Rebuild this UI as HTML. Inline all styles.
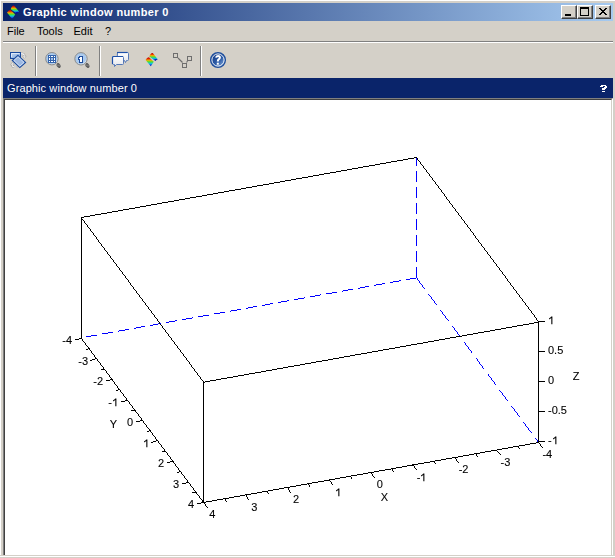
<!DOCTYPE html>
<html><head><meta charset="utf-8">
<style>
html,body{margin:0;padding:0;}
body{width:615px;height:558px;position:relative;overflow:hidden;background:#d4d0c8;font-family:"Liberation Sans",sans-serif;}
.abs{position:absolute;}
#hl{position:absolute;left:0;top:0;width:615px;height:1px;background:#fff;}
#vl{position:absolute;left:0;top:0;width:1px;height:558px;background:#fff;}
#title{position:absolute;left:3px;top:3px;width:610px;height:18px;background:linear-gradient(to right,#0a246a,#a6caf0);}
#title .t{position:absolute;left:20px;top:3px;letter-spacing:0.36px;font-weight:bold;font-size:11px;color:#fff;line-height:13px;white-space:nowrap;}
.cb{position:absolute;top:5px;width:16px;height:14px;background:#d4d0c8;box-sizing:border-box;}
.cb:before{content:"";position:absolute;left:0;top:0;right:0;bottom:0;border-top:1px solid #fff;border-left:1px solid #fff;border-right:1px solid #404040;border-bottom:1px solid #404040;}
.cb:after{content:"";position:absolute;left:1px;top:1px;right:1px;bottom:1px;border-right:1px solid #808080;border-bottom:1px solid #808080;}
.menu{position:absolute;top:25px;font-size:11px;line-height:13px;color:#000;white-space:nowrap;}
#msep1{position:absolute;left:3px;top:41px;width:610px;height:1px;background:#808080;}
#msep2{position:absolute;left:3px;top:42px;width:610px;height:1px;background:#fff;}
.tsep{position:absolute;top:46px;width:1px;height:30px;background:#808080;}
.tsep2{position:absolute;top:46px;width:1px;height:30px;background:#fff;}
#hdr{position:absolute;left:3px;top:78px;width:610px;height:20px;background:#0a246a;}
#hdr .t{position:absolute;left:4px;top:4px;letter-spacing:0.1px;font-size:11px;line-height:13px;color:#fff;white-space:nowrap;}
#hdr .q{position:absolute;left:597px;top:4px;font-size:11px;font-weight:bold;line-height:13px;color:#fff;}
#canvas{position:absolute;left:3px;top:98px;width:610px;height:459px;box-sizing:border-box;background:#fff;border-top:1px solid #808080;border-left:1px solid #808080;border-right:1px solid #fff;border-bottom:1px solid #fff;}
#canvas:before{content:"";position:absolute;left:0;top:0;right:0;bottom:0;border-top:1px solid #404040;border-left:1px solid #404040;border-right:1px solid #d4d0c8;border-bottom:1px solid #d4d0c8;}
.plot{position:absolute;left:0;top:0;}
#labels{position:absolute;left:0;top:0;width:615px;height:558px;will-change:transform;}
.lb,.lc{position:absolute;font-size:11px;line-height:13px;color:#000;white-space:nowrap;-webkit-text-stroke:0.1px #000;}
.lc{width:60px;text-align:center;}
.one{display:inline-block;width:6.12px;height:13px;vertical-align:top;}
.one svg{display:block;}
</style></head><body>
<div id="hl"></div><div id="vl"></div>
<div id="title">
  <svg class="abs" style="left:3px;top:1px" width="16" height="16">
    <g transform="translate(0.6,1.9)"><use href="#logo"/></g>
  </svg>
  <div class="t">Graphic window number 0</div>
</div>
<div class="cb" style="left:561px"></div>
<div class="cb" style="left:577px"></div>
<div class="cb" style="left:595px"></div>
<svg class="abs" style="left:0;top:0" width="615" height="22" shape-rendering="crispEdges">
  <rect x="565" y="14" width="6" height="2" fill="#000"/>
  <path d="M580 7h9v9h-9z M581 9v6h7v-6z" fill="#000" fill-rule="evenodd"/>
  <path d="M599 8h2v1h-2zM605 8h2v1h-2zM600 9h2v1h-2zM604 9h2v1h-2zM601 10h4v1h-4zM602 11h2v1h-2zM601 12h4v1h-4zM600 13h2v1h-2zM604 13h2v1h-2zM599 14h2v1h-2zM605 14h2v1h-2z" fill="#000"/>
</svg>
<div class="menu" style="left:7px">File</div>
<div class="menu" style="left:37px">Tools</div>
<div class="menu" style="left:73.5px">Edit</div>
<div class="menu" style="left:105px">?</div>
<div id="msep1"></div><div id="msep2"></div>
<div class="tsep" style="left:35px"></div><div class="tsep2" style="left:36px"></div>
<div class="tsep" style="left:99px"></div><div class="tsep2" style="left:100px"></div>
<div class="tsep" style="left:200px"></div><div class="tsep2" style="left:201px"></div>
<!-- toolbar icons -->
<svg class="abs" style="left:0;top:40px" width="240" height="36">
  <defs>
    <linearGradient id="bl" x1="0" y1="0" x2="1" y2="1"><stop offset="0" stop-color="#c4d8f2"/><stop offset="1" stop-color="#7fa3d8"/></linearGradient>
    <radialGradient id="lens" cx="0.45" cy="0.45" r="0.55"><stop offset="0" stop-color="#b4d0f0"/><stop offset="0.75" stop-color="#a8c8ec"/><stop offset="1" stop-color="#dceaf8"/></radialGradient>
    <linearGradient id="bub" x1="0" y1="0" x2="0" y2="1"><stop offset="0" stop-color="#ffffff"/><stop offset="1" stop-color="#e2e4ea"/></linearGradient>
    <linearGradient id="hlp" x1="0.15" y1="0.15" x2="0.9" y2="0.9"><stop offset="0" stop-color="#173f8a"/><stop offset="0.55" stop-color="#2f5ea8"/><stop offset="1" stop-color="#80a6da"/></linearGradient>
    <linearGradient id="knob" x1="0" y1="0" x2="1" y2="1"><stop offset="0" stop-color="#3a3a3a"/><stop offset="0.5" stop-color="#7a7a7a"/><stop offset="1" stop-color="#2a2a2a"/></linearGradient>
  </defs>
  <!-- rotate icon -->
  <g fill="none" stroke-linecap="round">
  <path d="M21 13.9 H22.4 Q24.3 13.9 24.3 15.8 V16.4" stroke="#a0a0a0" stroke-width="2.2"/>
  <path d="M16.4 27 H14.2 Q12.3 27 12.3 25.1 V24.6" stroke="#a0a0a0" stroke-width="2.2"/>
  <path d="M21 13.9 H22.4 Q24.3 13.9 24.3 15.8 V16.4" stroke="#fff" stroke-width="1.1"/>
  <path d="M16.4 27 H14.2 Q12.3 27 12.3 25.1 V24.6" stroke="#fff" stroke-width="1.1"/>
  </g>
  <path d="M22.4 16.1 H26.2 L24.3 18.4 Z" fill="#fff" stroke="#a0a0a0" stroke-width="0.6"/>
  <path d="M10.4 24.9 H14.2 L12.3 22.4 Z" fill="#fff" stroke="#a0a0a0" stroke-width="0.6"/>
  <rect x="10.5" y="12.5" width="10" height="6" fill="url(#bl)" stroke="#1a4a9c"/>
  <path d="M11.5 17 v-3.5 h8" fill="none" stroke="#e8f0fb" stroke-width="0.8"/>
  <path d="M18 15.3 L25.6 22.4 L19.8 27.6 L12.3 20.5 Z" fill="#9cb8e2" stroke="#1a4a9c" stroke-width="1.1"/>
  <path d="M18 16.8 L24 22.4 L19.8 26.1 L13.8 20.5 Z" fill="none" stroke="#e6eefa" stroke-width="0.7"/>
  <!-- zoom icon -->
  <ellipse cx="58.6" cy="25.5" rx="2.6" ry="1.9" transform="rotate(45 58.6 25.5)" fill="url(#knob)"/>
  <circle cx="51.9" cy="18.7" r="6.2" fill="url(#lens)" stroke="#8a8a8a" stroke-width="1"/>
  <g shape-rendering="crispEdges">
  <rect x="48" y="15" width="8" height="8" fill="#3464ac"/>
  <path d="M49 16h1v1h-1z M51 16h2v1h-2z M54 16h1v1h-1z M49 18h1v2h-1z M54 18h1v2h-1z M49 21h1v1h-1z M51 21h2v1h-2z M54 21h1v1h-1z" fill="#fff"/>
  <rect x="51" y="18" width="2" height="2" fill="#9cbce6"/>
  </g>
  <!-- zoom 1 icon -->
  <ellipse cx="87.4" cy="25.5" rx="2.6" ry="1.9" transform="rotate(45 87.4 25.5)" fill="url(#knob)"/>
  <circle cx="81" cy="18.8" r="6.2" fill="url(#lens)" stroke="#8a8a8a" stroke-width="1"/>
  <g shape-rendering="crispEdges"><path d="M79 16h4v7h-4v-3h-1v-3h1z" fill="#1e4c9c"/><path d="M80 17h2v5h-2v-3h-1v-1h1z" fill="#fff"/></g>
  <!-- bubbles -->
  <path d="M117.5 12.5 h10 a1 1 0 0 1 1 1 v6 a1 1 0 0 1 -1 1 h-1 l-1 2 l-1 -2 h-7.5z" fill="url(#bub)" stroke="#5478b8"/>
  <path d="M117 12.5 h10.5" stroke="#1e50a8" stroke-width="1.2"/>
  <path d="M113.5 16.5 h9 a1 1 0 0 1 1 1 v6 a1 1 0 0 1 -1 1 h-6 l-2 2 v-2 h-1 a1 1 0 0 1 -1 -1 v-6 a1 1 0 0 1 1 -1z" fill="url(#bub)" stroke="#5478b8"/>
  <path d="M112.5 24 v-6.5 a1 1 0 0 1 1 -1 h9.5" fill="none" stroke="#1e50a8" stroke-width="1.2"/>
  <!-- scilab logo -->
  <defs>
  <linearGradient id="lg1" gradientUnits="userSpaceOnUse" x1="0" y1="3.6" x2="0" y2="13"><stop offset="0" stop-color="#b00000"/><stop offset="0.18" stop-color="#e02000"/><stop offset="0.36" stop-color="#f0b000"/><stop offset="0.52" stop-color="#50e030"/><stop offset="0.7" stop-color="#10c8d8"/><stop offset="0.86" stop-color="#1050e0"/><stop offset="1" stop-color="#0000a0"/></linearGradient>
  <linearGradient id="lg2" gradientUnits="userSpaceOnUse" x1="0" y1="-0.6" x2="0" y2="7.5"><stop offset="0" stop-color="#b00000"/><stop offset="0.18" stop-color="#e02000"/><stop offset="0.36" stop-color="#f0b000"/><stop offset="0.52" stop-color="#50e030"/><stop offset="0.7" stop-color="#10c8d8"/><stop offset="0.86" stop-color="#1050e0"/><stop offset="1" stop-color="#0000a0"/></linearGradient>
  <g id="logo">
  <path d="M0.4 6.6 Q2.2 3.5 4.1 4.2 L8.6 8.5 L5.6 13 Z" fill="url(#lg1)"/>
  <path d="M4.1 3.3 Q5.6 -0.9 7.6 -0.2 L12.5 5.9 L9.9 7.5 Z" fill="url(#lg2)"/>
  <path d="M9.6 6.2 L12.5 5.9 L9.9 7.5 Z" fill="#0000a0"/>
  </g>
  </defs>
  <use href="#logo" x="145.2" y="13.3"/>
  <!-- datatip -->
  <g shape-rendering="crispEdges" fill="none" stroke="#6e6e6e">
  <rect x="173.5" y="13.5" width="4" height="4"/>
  <rect x="182.5" y="23.5" width="4" height="4"/>
  <rect x="187.5" y="16.5" width="4" height="4"/>
  </g>
  <path d="M178 18 L182.5 22.5 M186.5 22.5 L187.5 21" stroke="#6e6e6e" stroke-width="1.1"/>
  <!-- help -->
  <circle cx="218" cy="20" r="7.3" fill="url(#hlp)" stroke="#1e4e9c" stroke-width="1.5"/>
  <circle cx="218" cy="20" r="6.1" fill="none" stroke="#fff" stroke-width="0.9"/>
  <path d="M216.1 17.6 Q216.3 15.9 218 15.9 Q219.9 15.9 219.9 17.6 Q219.9 18.7 218.7 19.4 Q217.8 19.9 217.8 21.4" fill="none" stroke="#fff" stroke-width="2"/><rect x="216.8" y="22.7" width="2" height="2" fill="#fff"/>
</svg>
<div id="hdr"><div class="t">Graphic window number 0</div><svg class="abs" style="left:0;top:0" width="610" height="20" shape-rendering="crispEdges"><path fill="#fff" d="M598 7h5v1h-5z M597 8h3v1h-3z M602 8h2v1h-2z M601 9h3v1h-3z M599 10h4v1h-4z M599 11h3v1h-3z M599 13h3v1h-3z"/></svg></div>
<div id="canvas"></div>
<div class="abs" style="left:0;top:555px;width:615px;height:1px;background:#d4d0c8"></div><div class="abs" style="left:0;top:556px;width:615px;height:1px;background:#fff"></div><div class="abs" style="left:0;top:557px;width:615px;height:1px;background:#d4d0c8"></div>
<svg class="plot" width="615" height="558" shape-rendering="crispEdges"><path fill="#0000ff" d="M416 157h1v1h-1zM416 158h1v1h-1zM416 159h1v1h-1zM416 160h1v1h-1zM416 161h1v1h-1zM416 162h1v1h-1zM416 163h1v1h-1zM416 164h1v1h-1zM416 165h1v1h-1zM416 171h1v1h-1zM416 172h1v1h-1zM416 173h1v1h-1zM416 174h1v1h-1zM416 175h1v1h-1zM416 176h1v1h-1zM416 177h1v1h-1zM416 178h1v1h-1zM416 179h1v1h-1zM416 180h1v1h-1zM416 181h1v1h-1zM416 187h1v1h-1zM416 188h1v1h-1zM416 189h1v1h-1zM416 190h1v1h-1zM416 191h1v1h-1zM416 192h1v1h-1zM416 193h1v1h-1zM416 194h1v1h-1zM416 195h1v1h-1zM416 196h1v1h-1zM416 197h1v1h-1zM416 203h1v1h-1zM416 204h1v1h-1zM416 205h1v1h-1zM416 206h1v1h-1zM416 207h1v1h-1zM416 208h1v1h-1zM416 209h1v1h-1zM416 210h1v1h-1zM416 211h1v1h-1zM416 212h1v1h-1zM416 213h1v1h-1zM416 219h1v1h-1zM416 220h1v1h-1zM416 221h1v1h-1zM416 222h1v1h-1zM416 223h1v1h-1zM416 224h1v1h-1zM416 225h1v1h-1zM416 226h1v1h-1zM416 227h1v1h-1zM416 228h1v1h-1zM416 229h1v1h-1zM416 235h1v1h-1zM416 236h1v1h-1zM416 237h1v1h-1zM416 238h1v1h-1zM416 239h1v1h-1zM416 240h1v1h-1zM416 241h1v1h-1zM416 242h1v1h-1zM416 243h1v1h-1zM416 244h1v1h-1zM416 245h1v1h-1zM416 251h1v1h-1zM416 252h1v1h-1zM416 253h1v1h-1zM416 254h1v1h-1zM416 255h1v1h-1zM416 256h1v1h-1zM416 257h1v1h-1zM416 258h1v1h-1zM416 259h1v1h-1zM416 260h1v1h-1zM416 261h1v1h-1zM416 267h1v1h-1zM416 268h1v1h-1zM416 269h1v1h-1zM416 270h1v1h-1zM416 271h1v1h-1zM416 272h1v1h-1zM416 273h1v1h-1zM416 274h1v1h-1zM416 275h1v1h-1zM416 276h1v1h-1zM416 277h1v1h-1zM410 278h6v1h-6zM417 278h1v1h-1zM406 279h4v1h-4zM417 279h1v1h-1zM399 280h2v1h-2zM418 280h1v1h-1zM393 281h6v1h-6zM419 281h1v1h-1zM390 282h3v1h-3zM419 282h1v1h-1zM382 283h3v1h-3zM420 283h1v1h-1zM376 284h6v1h-6zM421 284h1v1h-1zM374 285h2v1h-2zM422 285h1v1h-1zM365 286h4v1h-4zM422 286h1v1h-1zM360 287h5v1h-5zM423 287h1v1h-1zM358 288h2v1h-2zM424 288h1v1h-1zM348 289h5v1h-5zM343 290h5v1h-5zM342 291h1v1h-1zM332 292h5v1h-5zM326 293h6v1h-6zM320 294h1v1h-1zM428 294h1v1h-1zM315 295h5v1h-5zM429 295h1v1h-1zM310 296h5v1h-5zM430 296h1v1h-1zM304 297h1v1h-1zM431 297h1v1h-1zM298 298h6v1h-6zM431 298h1v1h-1zM294 299h4v1h-4zM432 299h1v1h-1zM287 300h2v1h-2zM433 300h1v1h-1zM281 301h6v1h-6zM434 301h1v1h-1zM278 302h3v1h-3zM434 302h1v1h-1zM270 303h3v1h-3zM435 303h1v1h-1zM265 304h5v1h-5zM436 304h1v1h-1zM262 305h3v1h-3zM253 306h4v1h-4zM248 307h5v1h-5zM246 308h2v1h-2zM237 309h4v1h-4zM231 310h6v1h-6zM440 310h1v1h-1zM230 311h1v1h-1zM441 311h1v1h-1zM220 312h5v1h-5zM442 312h1v1h-1zM214 313h6v1h-6zM442 313h1v1h-1zM443 314h1v1h-1zM203 315h6v1h-6zM444 315h1v1h-1zM198 316h5v1h-5zM445 316h1v1h-1zM192 317h1v1h-1zM445 317h1v1h-1zM186 318h6v1h-6zM446 318h1v1h-1zM182 319h4v1h-4zM447 319h1v1h-1zM175 320h2v1h-2zM448 320h1v1h-1zM169 321h6v1h-6zM166 322h3v1h-3zM158 323h3v1h-3zM153 324h5v1h-5zM150 325h3v1h-3zM141 326h4v1h-4zM452 326h1v1h-1zM136 327h5v1h-5zM453 327h1v1h-1zM134 328h2v1h-2zM454 328h1v1h-1zM125 329h4v1h-4zM454 329h1v1h-1zM119 330h6v1h-6zM455 330h1v1h-1zM118 331h1v1h-1zM456 331h1v1h-1zM108 332h5v1h-5zM457 332h1v1h-1zM102 333h6v1h-6zM457 333h1v1h-1zM458 334h1v1h-1zM91 335h6v1h-6zM459 335h1v1h-1zM86 336h5v1h-5zM459 336h1v1h-1zM464 342h1v1h-1zM465 343h1v1h-1zM465 344h1v1h-1zM466 345h1v1h-1zM467 346h1v1h-1zM468 347h1v1h-1zM468 348h1v1h-1zM469 349h1v1h-1zM470 350h1v1h-1zM471 351h1v1h-1zM471 352h1v1h-1zM476 358h1v1h-1zM477 359h1v1h-1zM477 360h1v1h-1zM478 361h1v1h-1zM479 362h1v1h-1zM479 363h1v1h-1zM480 364h1v1h-1zM481 365h1v1h-1zM482 366h1v1h-1zM482 367h1v1h-1zM483 368h1v1h-1zM488 374h1v1h-1zM488 375h1v1h-1zM489 376h1v1h-1zM490 377h1v1h-1zM491 378h1v1h-1zM491 379h1v1h-1zM492 380h1v1h-1zM493 381h1v1h-1zM494 382h1v1h-1zM494 383h1v1h-1zM495 384h1v1h-1zM499 390h1v1h-1zM500 391h1v1h-1zM501 392h1v1h-1zM502 393h1v1h-1zM502 394h1v1h-1zM503 395h1v1h-1zM504 396h1v1h-1zM505 397h1v1h-1zM505 398h1v1h-1zM506 399h1v1h-1zM507 400h1v1h-1zM511 406h1v1h-1zM512 407h1v1h-1zM513 408h1v1h-1zM514 409h1v1h-1zM514 410h1v1h-1zM515 411h1v1h-1zM516 412h1v1h-1zM517 413h1v1h-1zM517 414h1v1h-1zM518 415h1v1h-1zM519 416h1v1h-1zM523 422h1v1h-1zM524 423h1v1h-1zM525 424h1v1h-1zM525 425h1v1h-1zM526 426h1v1h-1zM527 427h1v1h-1zM528 428h1v1h-1zM528 429h1v1h-1zM529 430h1v1h-1zM530 431h1v1h-1zM531 432h1v1h-1zM535 438h1v1h-1zM536 439h1v1h-1zM537 440h1v1h-1zM537 441h1v1h-1zM538 442h1v1h-1z"/><path fill="#000" d="M414 157h3v1h-3zM408 158h6v1h-6zM417 158h1v1h-1zM403 159h5v1h-5zM417 159h1v1h-1zM397 160h6v1h-6zM418 160h1v1h-1zM391 161h6v1h-6zM419 161h1v1h-1zM386 162h5v1h-5zM420 162h1v1h-1zM380 163h6v1h-6zM420 163h1v1h-1zM375 164h5v1h-5zM421 164h1v1h-1zM369 165h6v1h-6zM422 165h1v1h-1zM363 166h6v1h-6zM423 166h1v1h-1zM358 167h5v1h-5zM423 167h1v1h-1zM352 168h6v1h-6zM424 168h1v1h-1zM347 169h5v1h-5zM425 169h1v1h-1zM341 170h6v1h-6zM426 170h1v1h-1zM336 171h5v1h-5zM426 171h1v1h-1zM330 172h6v1h-6zM427 172h1v1h-1zM324 173h6v1h-6zM428 173h1v1h-1zM319 174h5v1h-5zM429 174h1v1h-1zM313 175h6v1h-6zM429 175h1v1h-1zM308 176h5v1h-5zM430 176h1v1h-1zM302 177h6v1h-6zM431 177h1v1h-1zM296 178h6v1h-6zM432 178h1v1h-1zM291 179h5v1h-5zM432 179h1v1h-1zM285 180h6v1h-6zM433 180h1v1h-1zM280 181h5v1h-5zM434 181h1v1h-1zM274 182h6v1h-6zM435 182h1v1h-1zM269 183h5v1h-5zM435 183h1v1h-1zM263 184h6v1h-6zM436 184h1v1h-1zM257 185h6v1h-6zM437 185h1v1h-1zM252 186h5v1h-5zM438 186h1v1h-1zM246 187h6v1h-6zM438 187h1v1h-1zM241 188h5v1h-5zM439 188h1v1h-1zM235 189h6v1h-6zM440 189h1v1h-1zM229 190h6v1h-6zM441 190h1v1h-1zM224 191h5v1h-5zM441 191h1v1h-1zM218 192h6v1h-6zM442 192h1v1h-1zM213 193h5v1h-5zM443 193h1v1h-1zM207 194h6v1h-6zM444 194h1v1h-1zM202 195h5v1h-5zM444 195h1v1h-1zM196 196h6v1h-6zM445 196h1v1h-1zM190 197h6v1h-6zM446 197h1v1h-1zM185 198h5v1h-5zM446 198h1v1h-1zM179 199h6v1h-6zM447 199h1v1h-1zM174 200h5v1h-5zM448 200h1v1h-1zM168 201h6v1h-6zM449 201h1v1h-1zM162 202h6v1h-6zM449 202h1v1h-1zM157 203h5v1h-5zM450 203h1v1h-1zM151 204h6v1h-6zM451 204h1v1h-1zM146 205h5v1h-5zM452 205h1v1h-1zM140 206h6v1h-6zM452 206h1v1h-1zM135 207h5v1h-5zM453 207h1v1h-1zM129 208h6v1h-6zM454 208h1v1h-1zM123 209h6v1h-6zM455 209h1v1h-1zM118 210h5v1h-5zM455 210h1v1h-1zM112 211h6v1h-6zM456 211h1v1h-1zM107 212h5v1h-5zM457 212h1v1h-1zM101 213h6v1h-6zM458 213h1v1h-1zM95 214h6v1h-6zM458 214h1v1h-1zM90 215h5v1h-5zM459 215h1v1h-1zM84 216h6v1h-6zM460 216h1v1h-1zM81 217h3v1h-3zM461 217h1v1h-1zM81 218h1v1h-1zM461 218h1v1h-1zM81 219h2v1h-2zM462 219h1v1h-1zM81 220h1v1h-1zM83 220h1v1h-1zM463 220h1v1h-1zM81 221h1v1h-1zM84 221h1v1h-1zM464 221h1v1h-1zM81 222h1v1h-1zM84 222h1v1h-1zM464 222h1v1h-1zM81 223h1v1h-1zM85 223h1v1h-1zM465 223h1v1h-1zM81 224h1v1h-1zM86 224h1v1h-1zM466 224h1v1h-1zM81 225h1v1h-1zM87 225h1v1h-1zM467 225h1v1h-1zM81 226h1v1h-1zM87 226h1v1h-1zM467 226h1v1h-1zM81 227h1v1h-1zM88 227h1v1h-1zM468 227h1v1h-1zM81 228h1v1h-1zM89 228h1v1h-1zM469 228h1v1h-1zM81 229h1v1h-1zM90 229h1v1h-1zM470 229h1v1h-1zM81 230h1v1h-1zM90 230h1v1h-1zM470 230h1v1h-1zM81 231h1v1h-1zM91 231h1v1h-1zM471 231h1v1h-1zM81 232h1v1h-1zM92 232h1v1h-1zM472 232h1v1h-1zM81 233h1v1h-1zM93 233h1v1h-1zM473 233h1v1h-1zM81 234h1v1h-1zM93 234h1v1h-1zM473 234h1v1h-1zM81 235h1v1h-1zM94 235h1v1h-1zM474 235h1v1h-1zM81 236h1v1h-1zM95 236h1v1h-1zM475 236h1v1h-1zM81 237h1v1h-1zM96 237h1v1h-1zM475 237h1v1h-1zM81 238h1v1h-1zM96 238h1v1h-1zM476 238h1v1h-1zM81 239h1v1h-1zM97 239h1v1h-1zM477 239h1v1h-1zM81 240h1v1h-1zM98 240h1v1h-1zM478 240h1v1h-1zM81 241h1v1h-1zM98 241h1v1h-1zM478 241h1v1h-1zM81 242h1v1h-1zM99 242h1v1h-1zM479 242h1v1h-1zM81 243h1v1h-1zM100 243h1v1h-1zM480 243h1v1h-1zM81 244h1v1h-1zM101 244h1v1h-1zM481 244h1v1h-1zM81 245h1v1h-1zM101 245h1v1h-1zM481 245h1v1h-1zM81 246h1v1h-1zM102 246h1v1h-1zM482 246h1v1h-1zM81 247h1v1h-1zM103 247h1v1h-1zM483 247h1v1h-1zM81 248h1v1h-1zM104 248h1v1h-1zM484 248h1v1h-1zM81 249h1v1h-1zM104 249h1v1h-1zM484 249h1v1h-1zM81 250h1v1h-1zM105 250h1v1h-1zM485 250h1v1h-1zM81 251h1v1h-1zM106 251h1v1h-1zM486 251h1v1h-1zM81 252h1v1h-1zM107 252h1v1h-1zM487 252h1v1h-1zM81 253h1v1h-1zM107 253h1v1h-1zM487 253h1v1h-1zM81 254h1v1h-1zM108 254h1v1h-1zM488 254h1v1h-1zM81 255h1v1h-1zM109 255h1v1h-1zM489 255h1v1h-1zM81 256h1v1h-1zM110 256h1v1h-1zM490 256h1v1h-1zM81 257h1v1h-1zM110 257h1v1h-1zM490 257h1v1h-1zM81 258h1v1h-1zM111 258h1v1h-1zM491 258h1v1h-1zM81 259h1v1h-1zM112 259h1v1h-1zM492 259h1v1h-1zM81 260h1v1h-1zM113 260h1v1h-1zM493 260h1v1h-1zM81 261h1v1h-1zM113 261h1v1h-1zM493 261h1v1h-1zM81 262h1v1h-1zM114 262h1v1h-1zM494 262h1v1h-1zM81 263h1v1h-1zM115 263h1v1h-1zM495 263h1v1h-1zM81 264h1v1h-1zM116 264h1v1h-1zM496 264h1v1h-1zM81 265h1v1h-1zM116 265h1v1h-1zM496 265h1v1h-1zM81 266h1v1h-1zM117 266h1v1h-1zM497 266h1v1h-1zM81 267h1v1h-1zM118 267h1v1h-1zM498 267h1v1h-1zM81 268h1v1h-1zM119 268h1v1h-1zM499 268h1v1h-1zM81 269h1v1h-1zM119 269h1v1h-1zM499 269h1v1h-1zM81 270h1v1h-1zM120 270h1v1h-1zM500 270h1v1h-1zM81 271h1v1h-1zM121 271h1v1h-1zM501 271h1v1h-1zM81 272h1v1h-1zM122 272h1v1h-1zM502 272h1v1h-1zM81 273h1v1h-1zM122 273h1v1h-1zM502 273h1v1h-1zM81 274h1v1h-1zM123 274h1v1h-1zM503 274h1v1h-1zM81 275h1v1h-1zM124 275h1v1h-1zM504 275h1v1h-1zM81 276h1v1h-1zM125 276h1v1h-1zM505 276h1v1h-1zM81 277h1v1h-1zM125 277h1v1h-1zM505 277h1v1h-1zM81 278h1v1h-1zM126 278h1v1h-1zM506 278h1v1h-1zM81 279h1v1h-1zM127 279h1v1h-1zM507 279h1v1h-1zM81 280h1v1h-1zM128 280h1v1h-1zM507 280h1v1h-1zM81 281h1v1h-1zM128 281h1v1h-1zM508 281h1v1h-1zM81 282h1v1h-1zM129 282h1v1h-1zM509 282h1v1h-1zM81 283h1v1h-1zM130 283h1v1h-1zM510 283h1v1h-1zM81 284h1v1h-1zM130 284h1v1h-1zM510 284h1v1h-1zM81 285h1v1h-1zM131 285h1v1h-1zM511 285h1v1h-1zM81 286h1v1h-1zM132 286h1v1h-1zM512 286h1v1h-1zM81 287h1v1h-1zM133 287h1v1h-1zM513 287h1v1h-1zM81 288h1v1h-1zM133 288h1v1h-1zM513 288h1v1h-1zM81 289h1v1h-1zM134 289h1v1h-1zM514 289h1v1h-1zM81 290h1v1h-1zM135 290h1v1h-1zM515 290h1v1h-1zM81 291h1v1h-1zM136 291h1v1h-1zM516 291h1v1h-1zM81 292h1v1h-1zM136 292h1v1h-1zM516 292h1v1h-1zM81 293h1v1h-1zM137 293h1v1h-1zM517 293h1v1h-1zM81 294h1v1h-1zM138 294h1v1h-1zM518 294h1v1h-1zM81 295h1v1h-1zM139 295h1v1h-1zM519 295h1v1h-1zM81 296h1v1h-1zM139 296h1v1h-1zM519 296h1v1h-1zM81 297h1v1h-1zM140 297h1v1h-1zM520 297h1v1h-1zM81 298h1v1h-1zM141 298h1v1h-1zM521 298h1v1h-1zM81 299h1v1h-1zM142 299h1v1h-1zM522 299h1v1h-1zM81 300h1v1h-1zM142 300h1v1h-1zM522 300h1v1h-1zM81 301h1v1h-1zM143 301h1v1h-1zM523 301h1v1h-1zM81 302h1v1h-1zM144 302h1v1h-1zM524 302h1v1h-1zM81 303h1v1h-1zM145 303h1v1h-1zM525 303h1v1h-1zM81 304h1v1h-1zM145 304h1v1h-1zM525 304h1v1h-1zM81 305h1v1h-1zM146 305h1v1h-1zM526 305h1v1h-1zM81 306h1v1h-1zM147 306h1v1h-1zM527 306h1v1h-1zM81 307h1v1h-1zM148 307h1v1h-1zM528 307h1v1h-1zM81 308h1v1h-1zM148 308h1v1h-1zM528 308h1v1h-1zM81 309h1v1h-1zM149 309h1v1h-1zM529 309h1v1h-1zM81 310h1v1h-1zM150 310h1v1h-1zM530 310h1v1h-1zM81 311h1v1h-1zM151 311h1v1h-1zM531 311h1v1h-1zM81 312h1v1h-1zM151 312h1v1h-1zM531 312h1v1h-1zM81 313h1v1h-1zM152 313h1v1h-1zM532 313h1v1h-1zM81 314h1v1h-1zM153 314h1v1h-1zM533 314h1v1h-1zM81 315h1v1h-1zM154 315h1v1h-1zM534 315h1v1h-1zM81 316h1v1h-1zM154 316h1v1h-1zM534 316h1v1h-1zM81 317h1v1h-1zM155 317h1v1h-1zM535 317h1v1h-1zM81 318h1v1h-1zM156 318h1v1h-1zM536 318h1v1h-1zM81 319h1v1h-1zM157 319h1v1h-1zM536 319h1v1h-1zM81 320h1v1h-1zM157 320h1v1h-1zM537 320h1v1h-1zM81 321h1v1h-1zM158 321h1v1h-1zM538 321h7v1h-7zM81 322h1v1h-1zM159 322h1v1h-1zM534 322h5v1h-5zM81 323h1v1h-1zM159 323h1v1h-1zM529 323h5v1h-5zM538 323h1v1h-1zM81 324h1v1h-1zM160 324h1v1h-1zM523 324h6v1h-6zM538 324h1v1h-1zM81 325h1v1h-1zM161 325h1v1h-1zM517 325h6v1h-6zM538 325h1v1h-1zM81 326h1v1h-1zM162 326h1v1h-1zM512 326h5v1h-5zM538 326h1v1h-1zM81 327h1v1h-1zM162 327h1v1h-1zM506 327h6v1h-6zM538 327h1v1h-1zM81 328h1v1h-1zM163 328h1v1h-1zM501 328h5v1h-5zM538 328h1v1h-1zM81 329h1v1h-1zM164 329h1v1h-1zM495 329h6v1h-6zM538 329h1v1h-1zM81 330h1v1h-1zM165 330h1v1h-1zM490 330h5v1h-5zM538 330h1v1h-1zM81 331h1v1h-1zM165 331h1v1h-1zM484 331h6v1h-6zM538 331h1v1h-1zM81 332h1v1h-1zM166 332h1v1h-1zM478 332h6v1h-6zM538 332h1v1h-1zM81 333h1v1h-1zM167 333h1v1h-1zM473 333h5v1h-5zM538 333h1v1h-1zM81 334h1v1h-1zM168 334h1v1h-1zM467 334h6v1h-6zM538 334h1v1h-1zM81 335h1v1h-1zM168 335h1v1h-1zM462 335h5v1h-5zM538 335h1v1h-1zM81 336h1v1h-1zM169 336h1v1h-1zM456 336h6v1h-6zM538 336h1v1h-1zM81 337h1v1h-1zM170 337h1v1h-1zM450 337h6v1h-6zM538 337h1v1h-1zM79 338h3v1h-3zM171 338h1v1h-1zM445 338h5v1h-5zM538 338h1v1h-1zM75 339h4v1h-4zM82 339h1v1h-1zM171 339h1v1h-1zM439 339h6v1h-6zM538 339h1v1h-1zM82 340h1v1h-1zM172 340h1v1h-1zM434 340h5v1h-5zM538 340h1v1h-1zM83 341h1v1h-1zM173 341h1v1h-1zM428 341h6v1h-6zM538 341h1v1h-1zM84 342h1v1h-1zM174 342h1v1h-1zM423 342h5v1h-5zM538 342h1v1h-1zM85 343h1v1h-1zM174 343h1v1h-1zM417 343h6v1h-6zM538 343h1v1h-1zM85 344h1v1h-1zM175 344h1v1h-1zM411 344h6v1h-6zM538 344h1v1h-1zM86 345h1v1h-1zM176 345h1v1h-1zM406 345h5v1h-5zM538 345h1v1h-1zM87 346h1v1h-1zM177 346h1v1h-1zM400 346h6v1h-6zM538 346h1v1h-1zM88 347h1v1h-1zM177 347h1v1h-1zM395 347h5v1h-5zM538 347h1v1h-1zM88 348h2v1h-2zM178 348h1v1h-1zM389 348h6v1h-6zM538 348h1v1h-1zM86 349h2v1h-2zM89 349h1v1h-1zM179 349h1v1h-1zM383 349h6v1h-6zM538 349h1v1h-1zM90 350h1v1h-1zM180 350h1v1h-1zM378 350h5v1h-5zM538 350h1v1h-1zM91 351h1v1h-1zM180 351h1v1h-1zM372 351h6v1h-6zM538 351h7v1h-7zM91 352h1v1h-1zM181 352h1v1h-1zM367 352h5v1h-5zM538 352h1v1h-1zM92 353h1v1h-1zM182 353h1v1h-1zM361 353h6v1h-6zM538 353h1v1h-1zM93 354h1v1h-1zM183 354h1v1h-1zM355 354h6v1h-6zM538 354h1v1h-1zM94 355h1v1h-1zM183 355h1v1h-1zM350 355h5v1h-5zM538 355h1v1h-1zM94 356h1v1h-1zM184 356h1v1h-1zM344 356h6v1h-6zM538 356h1v1h-1zM95 357h1v1h-1zM185 357h1v1h-1zM339 357h5v1h-5zM538 357h1v1h-1zM95 358h2v1h-2zM186 358h1v1h-1zM333 358h6v1h-6zM538 358h1v1h-1zM92 359h3v1h-3zM97 359h1v1h-1zM186 359h1v1h-1zM328 359h5v1h-5zM538 359h1v1h-1zM90 360h2v1h-2zM97 360h1v1h-1zM187 360h1v1h-1zM322 360h6v1h-6zM538 360h1v1h-1zM98 361h1v1h-1zM188 361h1v1h-1zM316 361h6v1h-6zM538 361h1v1h-1zM99 362h1v1h-1zM189 362h1v1h-1zM311 362h5v1h-5zM538 362h1v1h-1zM100 363h1v1h-1zM189 363h1v1h-1zM305 363h6v1h-6zM538 363h1v1h-1zM100 364h1v1h-1zM190 364h1v1h-1zM300 364h5v1h-5zM538 364h1v1h-1zM101 365h1v1h-1zM191 365h1v1h-1zM294 365h6v1h-6zM538 365h1v1h-1zM102 366h1v1h-1zM191 366h1v1h-1zM288 366h6v1h-6zM538 366h1v1h-1zM103 367h1v1h-1zM192 367h1v1h-1zM283 367h5v1h-5zM538 367h1v1h-1zM103 368h1v1h-1zM193 368h1v1h-1zM277 368h6v1h-6zM538 368h1v1h-1zM101 369h4v1h-4zM194 369h1v1h-1zM272 369h5v1h-5zM538 369h1v1h-1zM105 370h1v1h-1zM194 370h1v1h-1zM266 370h6v1h-6zM538 370h1v1h-1zM106 371h1v1h-1zM195 371h1v1h-1zM261 371h5v1h-5zM538 371h1v1h-1zM106 372h1v1h-1zM196 372h1v1h-1zM255 372h6v1h-6zM538 372h1v1h-1zM107 373h1v1h-1zM197 373h1v1h-1zM249 373h6v1h-6zM538 373h1v1h-1zM108 374h1v1h-1zM197 374h1v1h-1zM244 374h5v1h-5zM538 374h1v1h-1zM109 375h1v1h-1zM198 375h1v1h-1zM238 375h6v1h-6zM538 375h1v1h-1zM109 376h1v1h-1zM199 376h1v1h-1zM233 376h5v1h-5zM538 376h1v1h-1zM110 377h1v1h-1zM200 377h1v1h-1zM227 377h6v1h-6zM538 377h1v1h-1zM111 378h1v1h-1zM200 378h1v1h-1zM221 378h6v1h-6zM538 378h1v1h-1zM110 379h3v1h-3zM201 379h1v1h-1zM216 379h5v1h-5zM538 379h1v1h-1zM106 380h4v1h-4zM112 380h1v1h-1zM202 380h1v1h-1zM210 380h6v1h-6zM538 380h1v1h-1zM113 381h1v1h-1zM203 381h1v1h-1zM205 381h5v1h-5zM538 381h7v1h-7zM114 382h1v1h-1zM203 382h2v1h-2zM538 382h1v1h-1zM114 383h1v1h-1zM203 383h1v1h-1zM538 383h1v1h-1zM115 384h1v1h-1zM203 384h1v1h-1zM538 384h1v1h-1zM116 385h1v1h-1zM203 385h1v1h-1zM538 385h1v1h-1zM117 386h1v1h-1zM203 386h1v1h-1zM538 386h1v1h-1zM117 387h1v1h-1zM203 387h1v1h-1zM538 387h1v1h-1zM118 388h1v1h-1zM203 388h1v1h-1zM538 388h1v1h-1zM118 389h2v1h-2zM203 389h1v1h-1zM538 389h1v1h-1zM116 390h2v1h-2zM120 390h1v1h-1zM203 390h1v1h-1zM538 390h1v1h-1zM120 391h1v1h-1zM203 391h1v1h-1zM538 391h1v1h-1zM121 392h1v1h-1zM203 392h1v1h-1zM538 392h1v1h-1zM122 393h1v1h-1zM203 393h1v1h-1zM538 393h1v1h-1zM123 394h1v1h-1zM203 394h1v1h-1zM538 394h1v1h-1zM123 395h1v1h-1zM203 395h1v1h-1zM538 395h1v1h-1zM124 396h1v1h-1zM203 396h1v1h-1zM538 396h1v1h-1zM125 397h1v1h-1zM203 397h1v1h-1zM538 397h1v1h-1zM126 398h1v1h-1zM203 398h1v1h-1zM538 398h1v1h-1zM126 399h1v1h-1zM203 399h1v1h-1zM538 399h1v1h-1zM125 400h3v1h-3zM203 400h1v1h-1zM538 400h1v1h-1zM121 401h4v1h-4zM128 401h1v1h-1zM203 401h1v1h-1zM538 401h1v1h-1zM129 402h1v1h-1zM203 402h1v1h-1zM538 402h1v1h-1zM129 403h1v1h-1zM203 403h1v1h-1zM538 403h1v1h-1zM130 404h1v1h-1zM203 404h1v1h-1zM538 404h1v1h-1zM131 405h1v1h-1zM203 405h1v1h-1zM538 405h1v1h-1zM132 406h1v1h-1zM203 406h1v1h-1zM538 406h1v1h-1zM132 407h1v1h-1zM203 407h1v1h-1zM538 407h1v1h-1zM133 408h1v1h-1zM203 408h1v1h-1zM538 408h1v1h-1zM134 409h1v1h-1zM203 409h1v1h-1zM538 409h1v1h-1zM131 410h5v1h-5zM203 410h1v1h-1zM538 410h1v1h-1zM135 411h1v1h-1zM203 411h1v1h-1zM538 411h7v1h-7zM136 412h1v1h-1zM203 412h1v1h-1zM538 412h1v1h-1zM137 413h1v1h-1zM203 413h1v1h-1zM538 413h1v1h-1zM138 414h1v1h-1zM203 414h1v1h-1zM538 414h1v1h-1zM138 415h1v1h-1zM203 415h1v1h-1zM538 415h1v1h-1zM139 416h1v1h-1zM203 416h1v1h-1zM538 416h1v1h-1zM140 417h1v1h-1zM203 417h1v1h-1zM538 417h1v1h-1zM141 418h1v1h-1zM203 418h1v1h-1zM538 418h1v1h-1zM141 419h1v1h-1zM203 419h1v1h-1zM538 419h1v1h-1zM140 420h3v1h-3zM203 420h1v1h-1zM538 420h1v1h-1zM136 421h4v1h-4zM143 421h1v1h-1zM203 421h1v1h-1zM538 421h1v1h-1zM143 422h1v1h-1zM203 422h1v1h-1zM538 422h1v1h-1zM144 423h1v1h-1zM203 423h1v1h-1zM538 423h1v1h-1zM145 424h1v1h-1zM203 424h1v1h-1zM538 424h1v1h-1zM146 425h1v1h-1zM203 425h1v1h-1zM538 425h1v1h-1zM146 426h1v1h-1zM203 426h1v1h-1zM538 426h1v1h-1zM147 427h1v1h-1zM203 427h1v1h-1zM538 427h1v1h-1zM148 428h1v1h-1zM203 428h1v1h-1zM538 428h1v1h-1zM149 429h1v1h-1zM203 429h1v1h-1zM538 429h1v1h-1zM149 430h2v1h-2zM203 430h1v1h-1zM538 430h1v1h-1zM147 431h2v1h-2zM150 431h1v1h-1zM203 431h1v1h-1zM538 431h1v1h-1zM151 432h1v1h-1zM203 432h1v1h-1zM538 432h1v1h-1zM152 433h1v1h-1zM203 433h1v1h-1zM538 433h1v1h-1zM152 434h1v1h-1zM203 434h1v1h-1zM538 434h1v1h-1zM153 435h1v1h-1zM203 435h1v1h-1zM538 435h1v1h-1zM154 436h1v1h-1zM203 436h1v1h-1zM538 436h1v1h-1zM155 437h1v1h-1zM203 437h1v1h-1zM538 437h1v1h-1zM155 438h1v1h-1zM203 438h1v1h-1zM538 438h1v1h-1zM156 439h1v1h-1zM203 439h1v1h-1zM538 439h1v1h-1zM156 440h2v1h-2zM203 440h1v1h-1zM538 440h1v1h-1zM153 441h3v1h-3zM158 441h1v1h-1zM203 441h1v1h-1zM538 441h7v1h-7zM151 442h2v1h-2zM158 442h1v1h-1zM203 442h1v1h-1zM536 442h3v1h-3zM159 443h1v1h-1zM203 443h1v1h-1zM530 443h6v1h-6zM539 443h1v1h-1zM160 444h1v1h-1zM203 444h1v1h-1zM525 444h5v1h-5zM540 444h1v1h-1zM161 445h1v1h-1zM203 445h1v1h-1zM519 445h6v1h-6zM540 445h1v1h-1zM161 446h1v1h-1zM203 446h1v1h-1zM513 446h6v1h-6zM541 446h1v1h-1zM162 447h1v1h-1zM203 447h1v1h-1zM508 447h5v1h-5zM518 447h1v1h-1zM542 447h1v1h-1zM163 448h1v1h-1zM203 448h1v1h-1zM502 448h6v1h-6zM519 448h1v1h-1zM164 449h1v1h-1zM203 449h1v1h-1zM497 449h5v1h-5zM164 450h1v1h-1zM203 450h1v1h-1zM491 450h6v1h-6zM162 451h4v1h-4zM203 451h1v1h-1zM485 451h6v1h-6zM497 451h1v1h-1zM166 452h1v1h-1zM203 452h1v1h-1zM480 452h5v1h-5zM498 452h1v1h-1zM167 453h1v1h-1zM203 453h1v1h-1zM474 453h6v1h-6zM499 453h1v1h-1zM167 454h1v1h-1zM203 454h1v1h-1zM469 454h5v1h-5zM476 454h1v1h-1zM500 454h1v1h-1zM168 455h1v1h-1zM203 455h1v1h-1zM463 455h6v1h-6zM476 455h1v1h-1zM169 456h1v1h-1zM203 456h1v1h-1zM458 456h5v1h-5zM477 456h1v1h-1zM170 457h1v1h-1zM203 457h1v1h-1zM452 457h6v1h-6zM170 458h1v1h-1zM203 458h1v1h-1zM446 458h6v1h-6zM455 458h1v1h-1zM171 459h1v1h-1zM203 459h1v1h-1zM441 459h5v1h-5zM456 459h1v1h-1zM172 460h1v1h-1zM203 460h1v1h-1zM435 460h6v1h-6zM456 460h1v1h-1zM170 461h4v1h-4zM203 461h1v1h-1zM430 461h5v1h-5zM457 461h1v1h-1zM167 462h3v1h-3zM173 462h1v1h-1zM203 462h1v1h-1zM424 462h6v1h-6zM434 462h1v1h-1zM458 462h1v1h-1zM174 463h1v1h-1zM203 463h1v1h-1zM418 463h6v1h-6zM435 463h1v1h-1zM175 464h1v1h-1zM203 464h1v1h-1zM412 464h6v1h-6zM175 465h1v1h-1zM203 465h1v1h-1zM407 465h7v1h-7zM176 466h1v1h-1zM203 466h1v1h-1zM402 466h5v1h-5zM414 466h1v1h-1zM177 467h1v1h-1zM203 467h1v1h-1zM396 467h6v1h-6zM414 467h1v1h-1zM178 468h1v1h-1zM203 468h1v1h-1zM391 468h5v1h-5zM415 468h1v1h-1zM178 469h1v1h-1zM203 469h1v1h-1zM385 469h6v1h-6zM392 469h1v1h-1zM416 469h1v1h-1zM179 470h1v1h-1zM203 470h1v1h-1zM379 470h6v1h-6zM392 470h1v1h-1zM179 471h2v1h-2zM203 471h1v1h-1zM374 471h5v1h-5zM393 471h1v1h-1zM177 472h2v1h-2zM181 472h1v1h-1zM203 472h1v1h-1zM368 472h6v1h-6zM181 473h1v1h-1zM203 473h1v1h-1zM363 473h5v1h-5zM371 473h1v1h-1zM182 474h1v1h-1zM203 474h1v1h-1zM357 474h6v1h-6zM372 474h1v1h-1zM183 475h1v1h-1zM203 475h1v1h-1zM351 475h6v1h-6zM372 475h1v1h-1zM184 476h1v1h-1zM203 476h1v1h-1zM346 476h5v1h-5zM373 476h1v1h-1zM184 477h1v1h-1zM203 477h1v1h-1zM340 477h6v1h-6zM351 477h1v1h-1zM374 477h1v1h-1zM185 478h1v1h-1zM203 478h1v1h-1zM335 478h5v1h-5zM351 478h1v1h-1zM186 479h1v1h-1zM203 479h1v1h-1zM329 479h6v1h-6zM187 480h1v1h-1zM203 480h1v1h-1zM324 480h6v1h-6zM187 481h1v1h-1zM203 481h1v1h-1zM318 481h6v1h-6zM330 481h1v1h-1zM186 482h3v1h-3zM203 482h1v1h-1zM312 482h6v1h-6zM331 482h1v1h-1zM182 483h4v1h-4zM189 483h1v1h-1zM203 483h1v1h-1zM307 483h5v1h-5zM331 483h1v1h-1zM190 484h1v1h-1zM203 484h1v1h-1zM301 484h6v1h-6zM308 484h1v1h-1zM332 484h1v1h-1zM190 485h1v1h-1zM203 485h1v1h-1zM296 485h5v1h-5zM309 485h1v1h-1zM191 486h1v1h-1zM203 486h1v1h-1zM290 486h6v1h-6zM309 486h1v1h-1zM192 487h1v1h-1zM203 487h1v1h-1zM284 487h6v1h-6zM193 488h1v1h-1zM203 488h1v1h-1zM279 488h5v1h-5zM288 488h1v1h-1zM193 489h1v1h-1zM203 489h1v1h-1zM273 489h6v1h-6zM288 489h1v1h-1zM194 490h1v1h-1zM203 490h1v1h-1zM268 490h5v1h-5zM289 490h1v1h-1zM195 491h1v1h-1zM203 491h1v1h-1zM262 491h6v1h-6zM289 491h1v1h-1zM192 492h5v1h-5zM203 492h1v1h-1zM257 492h5v1h-5zM267 492h1v1h-1zM290 492h1v1h-1zM196 493h1v1h-1zM203 493h1v1h-1zM251 493h6v1h-6zM268 493h1v1h-1zM197 494h1v1h-1zM203 494h1v1h-1zM245 494h6v1h-6zM198 495h1v1h-1zM203 495h1v1h-1zM240 495h5v1h-5zM246 495h1v1h-1zM199 496h1v1h-1zM203 496h1v1h-1zM234 496h6v1h-6zM246 496h1v1h-1zM199 497h1v1h-1zM203 497h1v1h-1zM229 497h5v1h-5zM247 497h1v1h-1zM200 498h1v1h-1zM203 498h1v1h-1zM223 498h6v1h-6zM247 498h1v1h-1zM201 499h1v1h-1zM203 499h1v1h-1zM217 499h6v1h-6zM225 499h1v1h-1zM248 499h1v1h-1zM202 500h2v1h-2zM212 500h5v1h-5zM225 500h1v1h-1zM202 501h2v1h-2zM206 501h6v1h-6zM226 501h1v1h-1zM201 502h5v1h-5zM197 503h4v1h-4zM204 503h1v1h-1zM205 504h1v1h-1zM205 505h1v1h-1zM206 506h1v1h-1zM207 507h1v1h-1z"/></svg>
<div id="labels">
<div class="lb" style="right:543px;top:334.0px">-4</div>
<div class="lb" style="right:527px;top:354.5px">-3</div>
<div class="lb" style="right:512px;top:375.0px">-2</div>
<div class="lb" style="right:497px;top:395.5px">-<span class="one"><svg width="6.12" height="13"><path d="M3.3 2.4H4.4V10.3H3.3V4.1Q2.4 4.9 1.1 5.4V4.3Q2.6 3.6 3.3 2.4Z"/></svg></span></div>
<div class="lb" style="right:482px;top:416.0px">0</div>
<div class="lb" style="right:466px;top:436.5px"><span class="one"><svg width="6.12" height="13"><path d="M3.3 2.4H4.4V10.3H3.3V4.1Q2.4 4.9 1.1 5.4V4.3Q2.6 3.6 3.3 2.4Z"/></svg></span></div>
<div class="lb" style="right:451px;top:457.0px">2</div>
<div class="lb" style="right:436px;top:477.5px">3</div>
<div class="lb" style="right:421px;top:498.0px">4</div>
<div class="lc" style="left:182.3px;top:508.0px">4</div>
<div class="lc" style="left:224.2px;top:500.5px">3</div>
<div class="lc" style="left:266.1px;top:493.0px">2</div>
<div class="lc" style="left:307.9px;top:485.5px"><span class="one"><svg width="6.12" height="13"><path d="M3.3 2.4H4.4V10.3H3.3V4.1Q2.4 4.9 1.1 5.4V4.3Q2.6 3.6 3.3 2.4Z"/></svg></span></div>
<div class="lc" style="left:349.8px;top:478.0px">0</div>
<div class="lc" style="left:391.7px;top:470.5px">-<span class="one"><svg width="6.12" height="13"><path d="M3.3 2.4H4.4V10.3H3.3V4.1Q2.4 4.9 1.1 5.4V4.3Q2.6 3.6 3.3 2.4Z"/></svg></span></div>
<div class="lc" style="left:433.6px;top:463.0px">-2</div>
<div class="lc" style="left:475.4px;top:455.5px">-3</div>
<div class="lc" style="left:517.3px;top:448.0px">-4</div>
<div class="lb" style="left:548.0px;top:434.0px">-<span class="one"><svg width="6.12" height="13"><path d="M3.3 2.4H4.4V10.3H3.3V4.1Q2.4 4.9 1.1 5.4V4.3Q2.6 3.6 3.3 2.4Z"/></svg></span></div>
<div class="lb" style="left:548.0px;top:404.0px">-0.5</div>
<div class="lb" style="left:548.0px;top:374.0px">0</div>
<div class="lb" style="left:548.0px;top:344.0px">0.5</div>
<div class="lb" style="left:548.0px;top:314.0px"><span class="one"><svg width="6.12" height="13"><path d="M3.3 2.4H4.4V10.3H3.3V4.1Q2.4 4.9 1.1 5.4V4.3Q2.6 3.6 3.3 2.4Z"/></svg></span></div>
<div class="lc" style="left:83.5px;top:418.0px">Y</div>
<div class="lc" style="left:354.5px;top:491.0px">X</div>
<div class="lc" style="left:546.0px;top:370.0px">Z</div>
</div>
</body></html>
